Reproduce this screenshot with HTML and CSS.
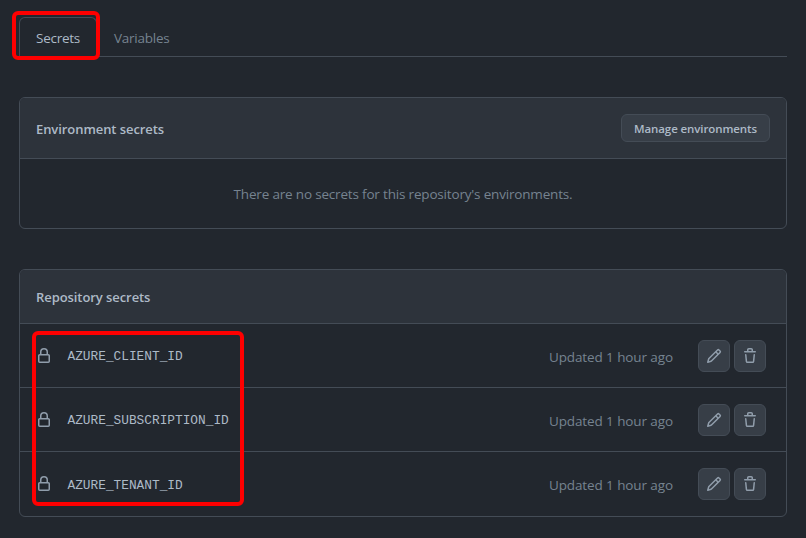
FILE: index.html
```html
<!DOCTYPE html>
<html lang="en">
<head>
<meta charset="utf-8">
<title>Secrets</title>
<link rel="stylesheet" href="styles.css">
</head>
<body>
<div class="page">
  <nav class="tabs">
    <a class="tab tab-active">Secrets</a>
    <a class="tab">Variables</a>
  </nav>

  <section class="box box-env">
    <header class="box-header box-header-env">
      <h3 class="box-title">Environment secrets</h3>
      <button class="btn btn-manage">Manage environments</button>
    </header>
    <p class="blank">There are no secrets for this repository's environments.</p>
  </section>

  <section class="box">
    <header class="box-header box-header-repo">
      <h3 class="box-title">Repository secrets</h3>
    </header>
    <div class="row">
      <svg class="icon lock" viewBox="0 0 16 16" width="16" height="16"><path d="M4 4a4 4 0 0 1 8 0v2h.25c.966 0 1.75.784 1.75 1.75v5.5A1.75 1.75 0 0 1 12.25 15h-8.5A1.75 1.75 0 0 1 2 13.25v-5.5C2 6.784 2.784 6 3.75 6H4Zm8.25 3.5h-8.5a.25.25 0 0 0-.25.25v5.5c0 .138.112.25.25.25h8.5a.25.25 0 0 0 .25-.25v-5.5a.25.25 0 0 0-.25-.25ZM10.5 6V4a2.5 2.5 0 1 0-5 0v2Z"/></svg>
      <code class="name">AZURE_CLIENT_ID</code>
      <span class="updated">Updated 1 hour ago</span>
      <div class="actions">
        <button class="btn btn-icon"><svg class="icon" viewBox="0 0 16 16" width="16" height="16"><path d="M11.013 1.427a1.75 1.75 0 0 1 2.474 0l1.086 1.086a1.75 1.75 0 0 1 0 2.474l-8.61 8.61c-.21.21-.47.364-.756.445l-3.251.93a.75.75 0 0 1-.927-.928l.929-3.25c.081-.286.235-.547.445-.758l8.61-8.61Zm.176 4.823L9.75 4.81l-6.286 6.287a.253.253 0 0 0-.064.108l-.558 1.953 1.953-.558a.253.253 0 0 0 .108-.064Zm1.238-3.763a.25.25 0 0 0-.354 0L10.811 3.75l1.439 1.44 1.263-1.263a.25.25 0 0 0 0-.354Z"/></svg></button>
        <button class="btn btn-icon"><svg class="icon" viewBox="0 0 16 16" width="16" height="16"><path d="M11 1.75V3h2.25a.75.75 0 0 1 0 1.5H2.75a.75.75 0 0 1 0-1.5H5V1.75C5 .784 5.784 0 6.75 0h2.5C10.216 0 11 .784 11 1.75ZM4.496 6.675l.66 6.6a.25.25 0 0 0 .249.225h5.19a.25.25 0 0 0 .249-.225l.66-6.6a.75.75 0 0 1 1.492.149l-.66 6.6A1.748 1.748 0 0 1 10.595 15h-5.19a1.75 1.75 0 0 1-1.741-1.575l-.66-6.6a.75.75 0 1 1 1.492-.15ZM6.5 1.75V3h3V1.75a.25.25 0 0 0-.25-.25h-2.5a.25.25 0 0 0-.25.25Z"/></svg></button>
      </div>
    </div>
    <div class="row">
      <svg class="icon lock" viewBox="0 0 16 16" width="16" height="16"><path d="M4 4a4 4 0 0 1 8 0v2h.25c.966 0 1.75.784 1.75 1.75v5.5A1.75 1.75 0 0 1 12.25 15h-8.5A1.75 1.75 0 0 1 2 13.25v-5.5C2 6.784 2.784 6 3.75 6H4Zm8.25 3.5h-8.5a.25.25 0 0 0-.25.25v5.5c0 .138.112.25.25.25h8.5a.25.25 0 0 0 .25-.25v-5.5a.25.25 0 0 0-.25-.25ZM10.5 6V4a2.5 2.5 0 1 0-5 0v2Z"/></svg>
      <code class="name">AZURE_SUBSCRIPTION_ID</code>
      <span class="updated">Updated 1 hour ago</span>
      <div class="actions">
        <button class="btn btn-icon"><svg class="icon" viewBox="0 0 16 16" width="16" height="16"><path d="M11.013 1.427a1.75 1.75 0 0 1 2.474 0l1.086 1.086a1.75 1.75 0 0 1 0 2.474l-8.61 8.61c-.21.21-.47.364-.756.445l-3.251.93a.75.75 0 0 1-.927-.928l.929-3.25c.081-.286.235-.547.445-.758l8.61-8.61Zm.176 4.823L9.75 4.81l-6.286 6.287a.253.253 0 0 0-.064.108l-.558 1.953 1.953-.558a.253.253 0 0 0 .108-.064Zm1.238-3.763a.25.25 0 0 0-.354 0L10.811 3.75l1.439 1.44 1.263-1.263a.25.25 0 0 0 0-.354Z"/></svg></button>
        <button class="btn btn-icon"><svg class="icon" viewBox="0 0 16 16" width="16" height="16"><path d="M11 1.75V3h2.25a.75.75 0 0 1 0 1.5H2.75a.75.75 0 0 1 0-1.5H5V1.75C5 .784 5.784 0 6.75 0h2.5C10.216 0 11 .784 11 1.75ZM4.496 6.675l.66 6.6a.25.25 0 0 0 .249.225h5.19a.25.25 0 0 0 .249-.225l.66-6.6a.75.75 0 0 1 1.492.149l-.66 6.6A1.748 1.748 0 0 1 10.595 15h-5.19a1.75 1.75 0 0 1-1.741-1.575l-.66-6.6a.75.75 0 1 1 1.492-.15ZM6.5 1.75V3h3V1.75a.25.25 0 0 0-.25-.25h-2.5a.25.25 0 0 0-.25.25Z"/></svg></button>
      </div>
    </div>
    <div class="row">
      <svg class="icon lock" viewBox="0 0 16 16" width="16" height="16"><path d="M4 4a4 4 0 0 1 8 0v2h.25c.966 0 1.75.784 1.75 1.75v5.5A1.75 1.75 0 0 1 12.25 15h-8.5A1.75 1.75 0 0 1 2 13.25v-5.5C2 6.784 2.784 6 3.75 6H4Zm8.25 3.5h-8.5a.25.25 0 0 0-.25.25v5.5c0 .138.112.25.25.25h8.5a.25.25 0 0 0 .25-.25v-5.5a.25.25 0 0 0-.25-.25ZM10.5 6V4a2.5 2.5 0 1 0-5 0v2Z"/></svg>
      <code class="name">AZURE_TENANT_ID</code>
      <span class="updated">Updated 1 hour ago</span>
      <div class="actions">
        <button class="btn btn-icon"><svg class="icon" viewBox="0 0 16 16" width="16" height="16"><path d="M11.013 1.427a1.75 1.75 0 0 1 2.474 0l1.086 1.086a1.75 1.75 0 0 1 0 2.474l-8.61 8.61c-.21.21-.47.364-.756.445l-3.251.93a.75.75 0 0 1-.927-.928l.929-3.25c.081-.286.235-.547.445-.758l8.61-8.61Zm.176 4.823L9.75 4.81l-6.286 6.287a.253.253 0 0 0-.064.108l-.558 1.953 1.953-.558a.253.253 0 0 0 .108-.064Zm1.238-3.763a.25.25 0 0 0-.354 0L10.811 3.75l1.439 1.44 1.263-1.263a.25.25 0 0 0 0-.354Z"/></svg></button>
        <button class="btn btn-icon"><svg class="icon" viewBox="0 0 16 16" width="16" height="16"><path d="M11 1.75V3h2.25a.75.75 0 0 1 0 1.5H2.75a.75.75 0 0 1 0-1.5H5V1.75C5 .784 5.784 0 6.75 0h2.5C10.216 0 11 .784 11 1.75ZM4.496 6.675l.66 6.6a.25.25 0 0 0 .249.225h5.19a.25.25 0 0 0 .249-.225l.66-6.6a.75.75 0 0 1 1.492.149l-.66 6.6A1.748 1.748 0 0 1 10.595 15h-5.19a1.75 1.75 0 0 1-1.741-1.575l-.66-6.6a.75.75 0 1 1 1.492-.15ZM6.5 1.75V3h3V1.75a.25.25 0 0 0-.25-.25h-2.5a.25.25 0 0 0-.25.25Z"/></svg></button>
      </div>
    </div>
  </section>

  <div class="mark mark-tab"></div>
  <div class="mark mark-names"></div>
</div>
</body>
</html>
```
FILE: styles.css
```css
* { box-sizing: border-box; }
html, body { margin: 0; height: 100%; overflow: hidden; background: #22272e; }
body { font-family: "Open Sans", "Noto Sans", sans-serif; font-size: 14px; color: #adbac7; }
.page { position: relative; height: 538px; padding: 17px 19px 0; }

.tabs { display: flex; height: 40px; border-bottom: 1px solid #444c56; margin-bottom: 40px; }
.tab { display: block; height: 40px; padding: 0 16px; line-height: 41px; font-size: 13.5px; letter-spacing: -0.25px; color: #768390; border: 1px solid transparent; border-radius: 6px 6px 0 0; }
.tab-active { color: #adbac7; background: #22272e; border-color: #444c56; border-bottom-color: #22272e; }

.box { border: 1px solid #444c56; border-radius: 6px; overflow: hidden; width: 768px; }
.box-env { margin-bottom: 40px; }
.box-header { display: flex; align-items: center; justify-content: space-between; padding: 0 16px; background: #2d333b; border-bottom: 1px solid #444c56; }
.box-header-env { height: 61px; }
.box-header-repo { height: 54px; }
.box-title { margin: 2px 0 0; font-size: 13px; font-weight: 600; letter-spacing: -0.07px; color: #adbac7; }
.box-header-repo .box-title { margin-top: 0; }

.btn { display: flex; align-items: center; justify-content: center; font-family: inherit; color: #adbac7; background: #373e47; border: 1px solid #444c56; border-radius: 6px; padding: 0; }
.btn-manage { width: 149px; height: 28px; font-size: 11.5px; font-weight: 600; letter-spacing: -0.1px; }
.btn-icon { width: 32px; height: 32px; }

.blank { margin: 0; height: 69px; line-height: 71px; text-align: center; font-size: 13.5px; color: #768390; letter-spacing: -0.18px; }

.row { display: flex; align-items: center; height: 64px; padding: 0 20px 0 16px; border-bottom: 1px solid #444c56; }
.row:last-child { border-bottom: 0; }
.icon { display: block; fill: currentColor; }
.lock { color: #909dab; flex: none; }
.name { margin: 2px 0 0 15.5px; flex: 1; font-family: "Liberation Mono", monospace; font-size: 12.8px; color: #adbac7; }
.updated { font-size: 13.5px; letter-spacing: -0.1px; color: #768390; margin: 2px 25px 0 0; }
.actions { display: flex; gap: 4px; }
.actions .icon { color: #909dab; }

.mark { position: absolute; border: 4px solid #fe0000; border-radius: 6px; pointer-events: none; }
.mark-tab { left: 12px; top: 11px; width: 88px; height: 49px; }
.mark-names { left: 32px; top: 331px; width: 212px; height: 175px; }
```
